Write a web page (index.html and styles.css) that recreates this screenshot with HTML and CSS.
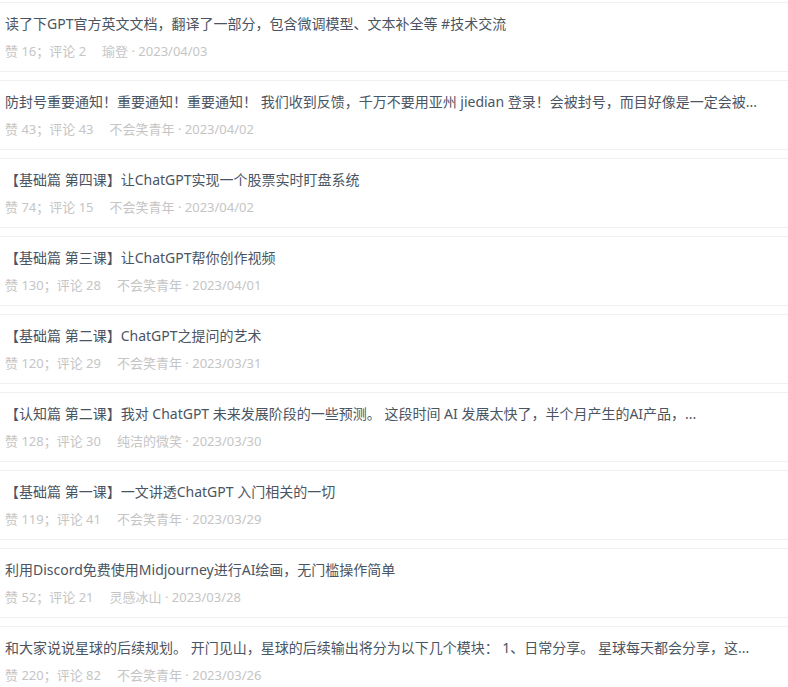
FILE: index.html
```html
<!DOCTYPE html>
<html>
<head>
  <meta charset="utf-8">
  <meta name="viewport" content="width=device-width, initial-scale=1">
  <link rel="stylesheet" href="styles.css">
</head>
<body>

<div class="topic-list">
  <div class="topic">
    <div class="topic-title">读了下GPT官方英文文档，翻译了一部分，包含微调模型、文本补全等 #技术交流</div>
    <div class="topic-meta"><span class="stats">赞 16；评论 2</span><span class="author">瑜登 · 2023/04/03</span></div>
  </div>
  <div class="topic">
    <div class="topic-title">防封号重要通知！重要通知！重要通知！ 我们收到反馈，千万不要用亚州 jiedian 登录！会被封号，而目好像是一定会被...</div>
    <div class="topic-meta"><span class="stats">赞 43；评论 43</span><span class="author">不会笑青年 · 2023/04/02</span></div>
  </div>
  <div class="topic">
    <div class="topic-title">【基础篇 第四课】让ChatGPT实现一个股票实时盯盘系统</div>
    <div class="topic-meta"><span class="stats">赞 74；评论 15</span><span class="author">不会笑青年 · 2023/04/02</span></div>
  </div>
  <div class="topic">
    <div class="topic-title">【基础篇 第三课】让ChatGPT帮你创作视频</div>
    <div class="topic-meta"><span class="stats">赞 130；评论 28</span><span class="author">不会笑青年 · 2023/04/01</span></div>
  </div>
  <div class="topic">
    <div class="topic-title">【基础篇 第二课】ChatGPT之提问的艺术</div>
    <div class="topic-meta"><span class="stats">赞 120；评论 29</span><span class="author">不会笑青年 · 2023/03/31</span></div>
  </div>
  <div class="topic">
    <div class="topic-title">【认知篇 第二课】我对 ChatGPT 未来发展阶段的一些预测。 这段时间 AI 发展太快了，半个月产生的AI产品，...</div>
    <div class="topic-meta"><span class="stats">赞 128；评论 30</span><span class="author">纯洁的微笑 · 2023/03/30</span></div>
  </div>
  <div class="topic">
    <div class="topic-title">【基础篇 第一课】一文讲透ChatGPT 入门相关的一切</div>
    <div class="topic-meta"><span class="stats">赞 119；评论 41</span><span class="author">不会笑青年 · 2023/03/29</span></div>
  </div>
  <div class="topic">
    <div class="topic-title">利用Discord免费使用Midjourney进行AI绘画，无门槛操作简单</div>
    <div class="topic-meta"><span class="stats">赞 52；评论 21</span><span class="author">灵感冰山 · 2023/03/28</span></div>
  </div>
  <div class="topic">
    <div class="topic-title">和大家说说星球的后续规划。 开门见山，星球的后续输出将分为以下几个模块： 1、日常分享。 星球每天都会分享，这...</div>
    <div class="topic-meta"><span class="stats">赞 220；评论 82</span><span class="author">不会笑青年 · 2023/03/26</span></div>
  </div>
</div>

</body>
</html>
```

FILE: styles.css
```css
body {
  margin: 0;
  background-color: #fff;
  font-family: "Noto Sans", "Noto Sans CJK SC", sans-serif;
}

.topic-list {
  display: flex;
  flex-direction: column;
  gap: 8px;
  padding-top: 2px;
}

.topic {
  border-top: 1px solid #f0f0f0;
  border-bottom: 1px solid #f0f0f0;
  padding: 11px 5px 10px;
}

.topic-title {
  font-size: 14px;
  line-height: 20px;
  color: #4a5563;
  white-space: nowrap;
  overflow: hidden;
}

.topic-meta {
  margin-top: 7px;
  font-size: 13px;
  line-height: 20px;
  color: #c5c5c5;
  white-space: nowrap;
}

.topic-meta .author {
  margin-left: 16px;
}
```
